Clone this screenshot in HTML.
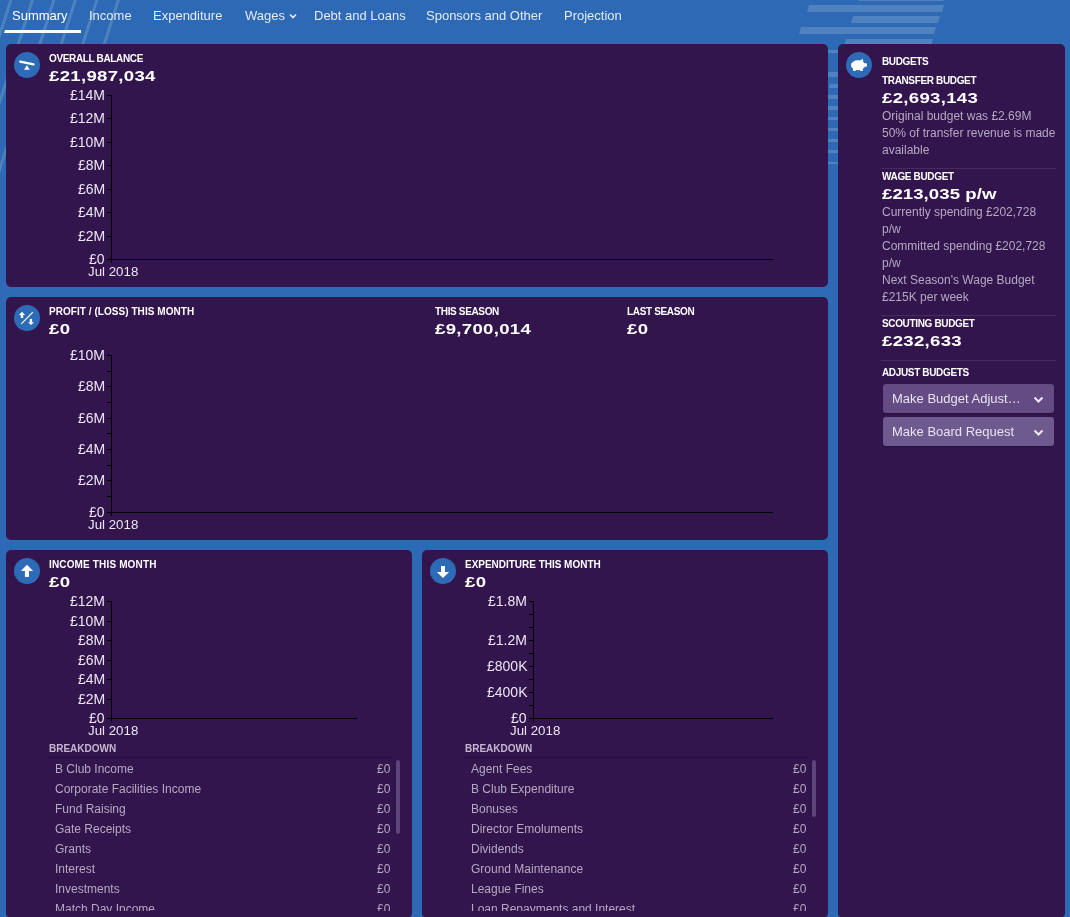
<!DOCTYPE html><html><head><meta charset="utf-8"><style>
html,body{margin:0;padding:0;}
body{width:1070px;height:917px;overflow:hidden;position:relative;background:#2d69b4;font-family:"Liberation Sans",sans-serif;}
.t{position:absolute;white-space:nowrap;will-change:transform;}
.r{position:absolute;}
svg{position:absolute;}
</style></head><body>
<svg width="1070" height="917" style="left:0;top:0"><line x1="11.5" y1="-2" x2="-53.1" y2="200" stroke="rgba(255,255,255,0.16)" stroke-width="3"/><line x1="33.0" y1="-2" x2="-31.6" y2="200" stroke="rgba(255,255,255,0.16)" stroke-width="3"/><line x1="54.5" y1="-2" x2="-10.1" y2="200" stroke="rgba(255,255,255,0.16)" stroke-width="3"/><line x1="76.0" y1="-2" x2="11.4" y2="200" stroke="rgba(255,255,255,0.16)" stroke-width="3"/><line x1="97.5" y1="-2" x2="32.9" y2="200" stroke="rgba(255,255,255,0.16)" stroke-width="3"/><line x1="119.0" y1="-2" x2="54.4" y2="200" stroke="rgba(255,255,255,0.16)" stroke-width="3"/><polygon points="860,-6 946,-6 944.1,1 858.1,1" fill="rgba(255,255,255,0.17)"/><polygon points="809,5 944,5 942.1,12 807.1,12" fill="rgba(255,255,255,0.17)"/><polygon points="853,16 940,16 938.1,23 851.1,23" fill="rgba(255,255,255,0.17)"/><polygon points="801,27 936,27 934.1,34 799.1,34" fill="rgba(255,255,255,0.17)"/><polygon points="846,39 933,39 931.1,46 844.1,46" fill="rgba(255,255,255,0.17)"/><polygon points="828,50 930,50 929.2,53 827.2,53" fill="rgba(255,255,255,0.17)"/><polygon points="828,72 840,72 838.6,77 826.6,77" fill="rgba(255,255,255,0.17)"/><polygon points="830,84 840,84 838.9,88 828.9,88" fill="rgba(255,255,255,0.17)"/><polygon points="828,95 840,95 838.9,99 826.9,99" fill="rgba(255,255,255,0.17)"/><polygon points="828,106 840,106 838.9,110 826.9,110" fill="rgba(255,255,255,0.17)"/><polygon points="828,117 840,117 839.2,120 827.2,120" fill="rgba(255,255,255,0.17)"/><polygon points="828,128 840,128 839.2,131 827.2,131" fill="rgba(255,255,255,0.17)"/><polygon points="828,139 840,139 839.2,142 827.2,142" fill="rgba(255,255,255,0.17)"/><polygon points="828,150 840,150 839.2,153 827.2,153" fill="rgba(255,255,255,0.17)"/><polygon points="828,162 840,162 839.5,164 827.5,164" fill="rgba(255,255,255,0.17)"/></svg>
<div class="t" style="top:7.70px;font-size:13px;line-height:16px;font-weight:400;color:#ffffff;left:11.50px;">Summary</div>
<div class="t" style="top:7.70px;font-size:13px;line-height:16px;font-weight:400;color:#e3ebf6;left:89.00px;">Income</div>
<div class="t" style="top:7.70px;font-size:13px;line-height:16px;font-weight:400;color:#e3ebf6;left:153.00px;">Expenditure</div>
<div class="t" style="top:7.70px;font-size:13px;line-height:16px;font-weight:400;color:#e3ebf6;left:245.00px;">Wages</div>
<div class="t" style="top:7.70px;font-size:13px;line-height:16px;font-weight:400;color:#e3ebf6;left:314.00px;">Debt and Loans</div>
<div class="t" style="top:7.70px;font-size:13px;line-height:16px;font-weight:400;color:#e3ebf6;left:425.50px;">Sponsors and Other</div>
<div class="t" style="top:7.70px;font-size:13px;line-height:16px;font-weight:400;color:#e3ebf6;left:563.50px;">Projection</div>
<svg width="10" height="8" style="left:288px;top:12px"><path d="M2 2.5 L5 5.5 L8 2.5" fill="none" stroke="#e3ebf6" stroke-width="1.7"/></svg>
<div class="r" style="left:4px;top:30px;width:77px;height:3px;background:#fff;clip-path:polygon(1px 0,100% 0,100% 100%,0 100%);"></div>
<div class="r" style="left:6px;top:44px;width:822px;height:243px;background:#33154e;border-radius:5px;"></div>
<div class="r" style="left:6px;top:297px;width:822px;height:243px;background:#33154e;border-radius:5px;"></div>
<div class="r" style="left:6px;top:550px;width:406px;height:368px;background:#33154e;border-radius:5px;"></div>
<div class="r" style="left:422px;top:550px;width:406px;height:368px;background:#33154e;border-radius:5px;"></div>
<div class="r" style="left:838px;top:44px;width:227px;height:874px;background:#33154e;border-radius:5px;"></div>
<svg width="26" height="26" style="left:14px;top:52px" viewBox="0 0 26 26"><circle cx="13" cy="13" r="13" fill="#2e6bb7"/><line x1="6.2" y1="9.6" x2="19.6" y2="12.4" stroke="#fff" stroke-width="2.2" stroke-linecap="round"/><polygon points="12.9,13.2 10.1,17.8 15.8,17.8" fill="#fff"/></svg>
<svg width="26" height="26" style="left:14px;top:305px" viewBox="0 0 26 26"><circle cx="13" cy="13" r="13" fill="#2e6bb7"/><polygon points="8,6.8 4.9,10 11.1,10" fill="#fff"/><rect x="6.8" y="9.8" width="2.4" height="3.2" fill="#fff"/><line x1="7.3" y1="18.8" x2="18.9" y2="7.2" stroke="#fff" stroke-width="1.2"/><rect x="15.8" y="13.9" width="2.3" height="3.5" fill="#fff"/><polygon points="14,17.2 20,17.2 17,20" fill="#fff"/></svg>
<svg width="26" height="26" style="left:14px;top:558px" viewBox="0 0 26 26"><circle cx="13" cy="13" r="13" fill="#2e6bb7"/><polygon points="13,6.8 6.9,12.9 19.1,12.9" fill="#fff"/><rect x="10.9" y="12.8" width="4.1" height="6.1" fill="#fff"/></svg>
<svg width="26" height="26" style="left:430px;top:558px" viewBox="0 0 26 26"><circle cx="13" cy="13" r="13" fill="#2e6bb7"/><polygon points="13,20 6.9,14 19.1,14" fill="#fff"/><rect x="11" y="8" width="4" height="6.1" fill="#fff"/></svg>
<svg width="26" height="26" style="left:846px;top:52px" viewBox="0 0 26 26"><circle cx="13" cy="13" r="13" fill="#2e6bb7"/><ellipse cx="12" cy="13.3" rx="7" ry="5" fill="#fff"/><rect x="16" y="11.2" width="5" height="3.6" rx="1.2" fill="#fff"/><polygon points="13.5,9 17,6.8 17.2,10.5" fill="#fff"/><rect x="7" y="15.5" width="2.8" height="3.4" fill="#fff"/><rect x="13.8" y="15.5" width="3" height="3.4" fill="#fff"/></svg>
<div class="t" style="top:52.53px;font-size:10px;line-height:12px;font-weight:700;color:#ffffff;left:49.00px;letter-spacing:-0.35px;">OVERALL BALANCE</div>
<div class="t" style="top:65.83px;font-size:15.5px;line-height:19px;font-weight:700;color:#ffffff;left:49.00px;letter-spacing:0.25px;transform:scaleX(1.2);transform-origin:0 0;">£21,987,034</div>
<div class="r" style="left:111px;top:95px;width:1px;height:168px;background:#000;"></div>
<div class="r" style="left:107px;top:259px;width:666px;height:1px;background:#000;"></div>
<div class="r" style="left:107px;top:95px;width:4px;height:1px;background:#000;"></div>
<div class="t" style="top:86.15px;font-size:14px;line-height:18px;font-weight:400;color:#ece6f2;right:965.00px;text-align:right;">£14M</div>
<div class="r" style="left:107px;top:118px;width:4px;height:1px;background:#000;"></div>
<div class="t" style="top:109.15px;font-size:14px;line-height:18px;font-weight:400;color:#ece6f2;right:965.00px;text-align:right;">£12M</div>
<div class="r" style="left:107px;top:142px;width:4px;height:1px;background:#000;"></div>
<div class="t" style="top:133.15px;font-size:14px;line-height:18px;font-weight:400;color:#ece6f2;right:965.00px;text-align:right;">£10M</div>
<div class="r" style="left:107px;top:165px;width:4px;height:1px;background:#000;"></div>
<div class="t" style="top:156.15px;font-size:14px;line-height:18px;font-weight:400;color:#ece6f2;right:965.00px;text-align:right;">£8M</div>
<div class="r" style="left:107px;top:189px;width:4px;height:1px;background:#000;"></div>
<div class="t" style="top:180.15px;font-size:14px;line-height:18px;font-weight:400;color:#ece6f2;right:965.00px;text-align:right;">£6M</div>
<div class="r" style="left:107px;top:212px;width:4px;height:1px;background:#000;"></div>
<div class="t" style="top:203.15px;font-size:14px;line-height:18px;font-weight:400;color:#ece6f2;right:965.00px;text-align:right;">£4M</div>
<div class="r" style="left:107px;top:236px;width:4px;height:1px;background:#000;"></div>
<div class="t" style="top:227.15px;font-size:14px;line-height:18px;font-weight:400;color:#ece6f2;right:965.00px;text-align:right;">£2M</div>
<div class="r" style="left:107px;top:259px;width:4px;height:1px;background:#000;"></div>
<div class="t" style="top:250.15px;font-size:14px;line-height:18px;font-weight:400;color:#ece6f2;right:965.00px;text-align:right;">£0</div>
<div class="t" style="top:262.89px;font-size:13.3px;line-height:17px;font-weight:400;color:#ece6f2;left:88.00px;">Jul 2018</div>
<div class="t" style="top:305.54px;font-size:10px;line-height:12px;font-weight:700;color:#ffffff;left:49.00px;letter-spacing:0.05px;">PROFIT / (LOSS) THIS MONTH</div>
<div class="t" style="top:318.93px;font-size:15.5px;line-height:19px;font-weight:700;color:#ffffff;left:49.00px;letter-spacing:0.25px;transform:scaleX(1.2);transform-origin:0 0;">£0</div>
<div class="t" style="top:305.54px;font-size:10px;line-height:12px;font-weight:700;color:#ffffff;left:434.50px;letter-spacing:-0.35px;">THIS SEASON</div>
<div class="t" style="top:318.93px;font-size:15.5px;line-height:19px;font-weight:700;color:#ffffff;left:434.50px;letter-spacing:0.25px;transform:scaleX(1.2);transform-origin:0 0;">£9,700,014</div>
<div class="t" style="top:305.54px;font-size:10px;line-height:12px;font-weight:700;color:#ffffff;left:626.50px;letter-spacing:-0.35px;">LAST SEASON</div>
<div class="t" style="top:318.93px;font-size:15.5px;line-height:19px;font-weight:700;color:#ffffff;left:626.50px;letter-spacing:0.25px;transform:scaleX(1.2);transform-origin:0 0;">£0</div>
<div class="r" style="left:111px;top:355px;width:1px;height:161px;background:#000;"></div>
<div class="r" style="left:107px;top:512px;width:666px;height:1px;background:#000;"></div>
<div class="r" style="left:107px;top:355px;width:4px;height:1px;background:#000;"></div>
<div class="t" style="top:346.15px;font-size:14px;line-height:18px;font-weight:400;color:#ece6f2;right:965.00px;text-align:right;">£10M</div>
<div class="r" style="left:107px;top:371px;width:4px;height:1px;background:#000;"></div>
<div class="r" style="left:107px;top:386px;width:4px;height:1px;background:#000;"></div>
<div class="t" style="top:377.15px;font-size:14px;line-height:18px;font-weight:400;color:#ece6f2;right:965.00px;text-align:right;">£8M</div>
<div class="r" style="left:107px;top:402px;width:4px;height:1px;background:#000;"></div>
<div class="r" style="left:107px;top:418px;width:4px;height:1px;background:#000;"></div>
<div class="t" style="top:409.15px;font-size:14px;line-height:18px;font-weight:400;color:#ece6f2;right:965.00px;text-align:right;">£6M</div>
<div class="r" style="left:107px;top:433px;width:4px;height:1px;background:#000;"></div>
<div class="r" style="left:107px;top:449px;width:4px;height:1px;background:#000;"></div>
<div class="t" style="top:440.15px;font-size:14px;line-height:18px;font-weight:400;color:#ece6f2;right:965.00px;text-align:right;">£4M</div>
<div class="r" style="left:107px;top:465px;width:4px;height:1px;background:#000;"></div>
<div class="r" style="left:107px;top:480px;width:4px;height:1px;background:#000;"></div>
<div class="t" style="top:471.15px;font-size:14px;line-height:18px;font-weight:400;color:#ece6f2;right:965.00px;text-align:right;">£2M</div>
<div class="r" style="left:107px;top:496px;width:4px;height:1px;background:#000;"></div>
<div class="r" style="left:107px;top:512px;width:4px;height:1px;background:#000;"></div>
<div class="t" style="top:503.15px;font-size:14px;line-height:18px;font-weight:400;color:#ece6f2;right:965.00px;text-align:right;">£0</div>
<div class="t" style="top:515.89px;font-size:13.3px;line-height:17px;font-weight:400;color:#ece6f2;left:88.00px;">Jul 2018</div>
<div class="t" style="top:558.53px;font-size:10px;line-height:12px;font-weight:700;color:#ffffff;left:49.00px;letter-spacing:0.15px;">INCOME THIS MONTH</div>
<div class="t" style="top:571.63px;font-size:15.5px;line-height:19px;font-weight:700;color:#ffffff;left:49.00px;letter-spacing:0.25px;transform:scaleX(1.2);transform-origin:0 0;">£0</div>
<div class="r" style="left:111px;top:601px;width:1px;height:121px;background:#000;"></div>
<div class="r" style="left:107px;top:718px;width:250px;height:1px;background:#000;"></div>
<div class="r" style="left:107px;top:601px;width:4px;height:1px;background:#000;"></div>
<div class="t" style="top:592.15px;font-size:14px;line-height:18px;font-weight:400;color:#ece6f2;right:965.00px;text-align:right;">£12M</div>
<div class="r" style="left:107px;top:621px;width:4px;height:1px;background:#000;"></div>
<div class="t" style="top:612.15px;font-size:14px;line-height:18px;font-weight:400;color:#ece6f2;right:965.00px;text-align:right;">£10M</div>
<div class="r" style="left:107px;top:640px;width:4px;height:1px;background:#000;"></div>
<div class="t" style="top:631.15px;font-size:14px;line-height:18px;font-weight:400;color:#ece6f2;right:965.00px;text-align:right;">£8M</div>
<div class="r" style="left:107px;top:660px;width:4px;height:1px;background:#000;"></div>
<div class="t" style="top:651.15px;font-size:14px;line-height:18px;font-weight:400;color:#ece6f2;right:965.00px;text-align:right;">£6M</div>
<div class="r" style="left:107px;top:679px;width:4px;height:1px;background:#000;"></div>
<div class="t" style="top:670.15px;font-size:14px;line-height:18px;font-weight:400;color:#ece6f2;right:965.00px;text-align:right;">£4M</div>
<div class="r" style="left:107px;top:699px;width:4px;height:1px;background:#000;"></div>
<div class="t" style="top:690.15px;font-size:14px;line-height:18px;font-weight:400;color:#ece6f2;right:965.00px;text-align:right;">£2M</div>
<div class="r" style="left:107px;top:718px;width:4px;height:1px;background:#000;"></div>
<div class="t" style="top:709.15px;font-size:14px;line-height:18px;font-weight:400;color:#ece6f2;right:965.00px;text-align:right;">£0</div>
<div class="t" style="top:721.89px;font-size:13.3px;line-height:17px;font-weight:400;color:#ece6f2;left:88.00px;">Jul 2018</div>
<div class="t" style="top:743.33px;font-size:10px;line-height:12px;font-weight:700;color:#c4b8d0;left:49.00px;letter-spacing:0px;">BREAKDOWN</div>
<div class="r" style="left:49px;top:757px;width:342px;height:1px;background:rgba(0,0,0,0.28);"></div>
<div style="position:absolute;left:0;top:757px;width:1070px;height:154px;overflow:hidden">
<div class="t" style="top:4.54px;font-size:12px;line-height:15px;font-weight:400;color:#b5a9c1;left:54.50px;">B Club Income</div>
<div class="t" style="top:4.54px;font-size:12px;line-height:15px;font-weight:400;color:#b5a9c1;right:679.50px;text-align:right;">£0</div>
<div class="t" style="top:24.54px;font-size:12px;line-height:15px;font-weight:400;color:#b5a9c1;left:54.50px;">Corporate Facilities Income</div>
<div class="t" style="top:24.54px;font-size:12px;line-height:15px;font-weight:400;color:#b5a9c1;right:679.50px;text-align:right;">£0</div>
<div class="t" style="top:44.54px;font-size:12px;line-height:15px;font-weight:400;color:#b5a9c1;left:54.50px;">Fund Raising</div>
<div class="t" style="top:44.54px;font-size:12px;line-height:15px;font-weight:400;color:#b5a9c1;right:679.50px;text-align:right;">£0</div>
<div class="t" style="top:64.54px;font-size:12px;line-height:15px;font-weight:400;color:#b5a9c1;left:54.50px;">Gate Receipts</div>
<div class="t" style="top:64.54px;font-size:12px;line-height:15px;font-weight:400;color:#b5a9c1;right:679.50px;text-align:right;">£0</div>
<div class="t" style="top:84.54px;font-size:12px;line-height:15px;font-weight:400;color:#b5a9c1;left:54.50px;">Grants</div>
<div class="t" style="top:84.54px;font-size:12px;line-height:15px;font-weight:400;color:#b5a9c1;right:679.50px;text-align:right;">£0</div>
<div class="t" style="top:104.54px;font-size:12px;line-height:15px;font-weight:400;color:#b5a9c1;left:54.50px;">Interest</div>
<div class="t" style="top:104.54px;font-size:12px;line-height:15px;font-weight:400;color:#b5a9c1;right:679.50px;text-align:right;">£0</div>
<div class="t" style="top:124.54px;font-size:12px;line-height:15px;font-weight:400;color:#b5a9c1;left:54.50px;">Investments</div>
<div class="t" style="top:124.54px;font-size:12px;line-height:15px;font-weight:400;color:#b5a9c1;right:679.50px;text-align:right;">£0</div>
<div class="t" style="top:144.54px;font-size:12px;line-height:15px;font-weight:400;color:#b5a9c1;left:54.50px;">Match Day Income</div>
<div class="t" style="top:144.54px;font-size:12px;line-height:15px;font-weight:400;color:#b5a9c1;right:679.50px;text-align:right;">£0</div>
</div>
<div class="r" style="left:396px;top:760px;width:4px;height:74px;background:#5b4579;border-radius:2px;"></div>
<div class="t" style="top:558.53px;font-size:10px;line-height:12px;font-weight:700;color:#ffffff;left:465.00px;letter-spacing:-0.02px;">EXPENDITURE THIS MONTH</div>
<div class="t" style="top:571.63px;font-size:15.5px;line-height:19px;font-weight:700;color:#ffffff;left:465.00px;letter-spacing:0.25px;transform:scaleX(1.2);transform-origin:0 0;">£0</div>
<div class="r" style="left:533px;top:601px;width:1px;height:121px;background:#000;"></div>
<div class="r" style="left:529px;top:718px;width:244px;height:1px;background:#000;"></div>
<div class="r" style="left:529px;top:601px;width:4px;height:1px;background:#000;"></div>
<div class="t" style="top:592.15px;font-size:14px;line-height:18px;font-weight:400;color:#ece6f2;right:543.00px;text-align:right;">£1.8M</div>
<div class="r" style="left:529px;top:614px;width:4px;height:1px;background:#000;"></div>
<div class="r" style="left:529px;top:627px;width:4px;height:1px;background:#000;"></div>
<div class="r" style="left:529px;top:640px;width:4px;height:1px;background:#000;"></div>
<div class="t" style="top:631.15px;font-size:14px;line-height:18px;font-weight:400;color:#ece6f2;right:543.00px;text-align:right;">£1.2M</div>
<div class="r" style="left:529px;top:653px;width:4px;height:1px;background:#000;"></div>
<div class="r" style="left:529px;top:666px;width:4px;height:1px;background:#000;"></div>
<div class="t" style="top:657.15px;font-size:14px;line-height:18px;font-weight:400;color:#ece6f2;right:543.00px;text-align:right;">£800K</div>
<div class="r" style="left:529px;top:679px;width:4px;height:1px;background:#000;"></div>
<div class="r" style="left:529px;top:692px;width:4px;height:1px;background:#000;"></div>
<div class="t" style="top:683.15px;font-size:14px;line-height:18px;font-weight:400;color:#ece6f2;right:543.00px;text-align:right;">£400K</div>
<div class="r" style="left:529px;top:705px;width:4px;height:1px;background:#000;"></div>
<div class="r" style="left:529px;top:718px;width:4px;height:1px;background:#000;"></div>
<div class="t" style="top:709.15px;font-size:14px;line-height:18px;font-weight:400;color:#ece6f2;right:543.00px;text-align:right;">£0</div>
<div class="t" style="top:721.89px;font-size:13.3px;line-height:17px;font-weight:400;color:#ece6f2;left:510.00px;">Jul 2018</div>
<div class="t" style="top:743.33px;font-size:10px;line-height:12px;font-weight:700;color:#c4b8d0;left:465.00px;letter-spacing:0px;">BREAKDOWN</div>
<div class="r" style="left:465px;top:757px;width:342px;height:1px;background:rgba(0,0,0,0.28);"></div>
<div style="position:absolute;left:0;top:757px;width:1070px;height:154px;overflow:hidden">
<div class="t" style="top:4.54px;font-size:12px;line-height:15px;font-weight:400;color:#b5a9c1;left:470.50px;">Agent Fees</div>
<div class="t" style="top:4.54px;font-size:12px;line-height:15px;font-weight:400;color:#b5a9c1;right:263.50px;text-align:right;">£0</div>
<div class="t" style="top:24.54px;font-size:12px;line-height:15px;font-weight:400;color:#b5a9c1;left:470.50px;">B Club Expenditure</div>
<div class="t" style="top:24.54px;font-size:12px;line-height:15px;font-weight:400;color:#b5a9c1;right:263.50px;text-align:right;">£0</div>
<div class="t" style="top:44.54px;font-size:12px;line-height:15px;font-weight:400;color:#b5a9c1;left:470.50px;">Bonuses</div>
<div class="t" style="top:44.54px;font-size:12px;line-height:15px;font-weight:400;color:#b5a9c1;right:263.50px;text-align:right;">£0</div>
<div class="t" style="top:64.54px;font-size:12px;line-height:15px;font-weight:400;color:#b5a9c1;left:470.50px;">Director Emoluments</div>
<div class="t" style="top:64.54px;font-size:12px;line-height:15px;font-weight:400;color:#b5a9c1;right:263.50px;text-align:right;">£0</div>
<div class="t" style="top:84.54px;font-size:12px;line-height:15px;font-weight:400;color:#b5a9c1;left:470.50px;">Dividends</div>
<div class="t" style="top:84.54px;font-size:12px;line-height:15px;font-weight:400;color:#b5a9c1;right:263.50px;text-align:right;">£0</div>
<div class="t" style="top:104.54px;font-size:12px;line-height:15px;font-weight:400;color:#b5a9c1;left:470.50px;">Ground Maintenance</div>
<div class="t" style="top:104.54px;font-size:12px;line-height:15px;font-weight:400;color:#b5a9c1;right:263.50px;text-align:right;">£0</div>
<div class="t" style="top:124.54px;font-size:12px;line-height:15px;font-weight:400;color:#b5a9c1;left:470.50px;">League Fines</div>
<div class="t" style="top:124.54px;font-size:12px;line-height:15px;font-weight:400;color:#b5a9c1;right:263.50px;text-align:right;">£0</div>
<div class="t" style="top:144.54px;font-size:12px;line-height:15px;font-weight:400;color:#b5a9c1;left:470.50px;">Loan Repayments and Interest</div>
<div class="t" style="top:144.54px;font-size:12px;line-height:15px;font-weight:400;color:#b5a9c1;right:263.50px;text-align:right;">£0</div>
</div>
<div class="r" style="left:812px;top:760px;width:4px;height:57px;background:#5b4579;border-radius:2px;"></div>
<div class="t" style="top:56.44px;font-size:10px;line-height:12px;font-weight:700;color:#ffffff;left:881.50px;letter-spacing:-0.35px;">BUDGETS</div>
<div class="t" style="top:74.53px;font-size:10px;line-height:12px;font-weight:700;color:#ffffff;left:881.50px;letter-spacing:-0.35px;">TRANSFER BUDGET</div>
<div class="t" style="top:88.03px;font-size:15.5px;line-height:19px;font-weight:700;color:#ffffff;left:881.50px;letter-spacing:0.25px;transform:scaleX(1.2);transform-origin:0 0;">£2,693,143</div>
<div class="t" style="top:108.74px;font-size:12px;line-height:15px;font-weight:400;color:#b5a9c1;left:881.50px;">Original budget was £2.69M</div>
<div class="t" style="top:125.74px;font-size:12px;line-height:15px;font-weight:400;color:#b5a9c1;left:881.50px;">50% of transfer revenue is made</div>
<div class="t" style="top:142.74px;font-size:12px;line-height:15px;font-weight:400;color:#b5a9c1;left:881.50px;">available</div>
<div class="r" style="left:881px;top:168px;width:175px;height:1px;background:rgba(255,255,255,0.1);"></div>
<div class="t" style="top:170.73px;font-size:10px;line-height:12px;font-weight:700;color:#ffffff;left:881.50px;letter-spacing:-0.35px;">WAGE BUDGET</div>
<div class="t" style="top:184.03px;font-size:15.5px;line-height:19px;font-weight:700;color:#ffffff;left:881.50px;letter-spacing:0.05px;transform:scaleX(1.2);transform-origin:0 0;">£213,035 p/w</div>
<div class="t" style="top:205.04px;font-size:12px;line-height:15px;font-weight:400;color:#b5a9c1;left:881.50px;">Currently spending £202,728</div>
<div class="t" style="top:222.04px;font-size:12px;line-height:15px;font-weight:400;color:#b5a9c1;left:881.50px;">p/w</div>
<div class="t" style="top:239.04px;font-size:12px;line-height:15px;font-weight:400;color:#b5a9c1;left:881.50px;">Committed spending £202,728</div>
<div class="t" style="top:256.04px;font-size:12px;line-height:15px;font-weight:400;color:#b5a9c1;left:881.50px;">p/w</div>
<div class="t" style="top:273.04px;font-size:12px;line-height:15px;font-weight:400;color:#b5a9c1;left:881.50px;">Next Season's Wage Budget</div>
<div class="t" style="top:290.04px;font-size:12px;line-height:15px;font-weight:400;color:#b5a9c1;left:881.50px;">£215K per week</div>
<div class="r" style="left:881px;top:315px;width:175px;height:1px;background:rgba(255,255,255,0.1);"></div>
<div class="t" style="top:317.64px;font-size:10px;line-height:12px;font-weight:700;color:#ffffff;left:881.50px;letter-spacing:-0.35px;">SCOUTING BUDGET</div>
<div class="t" style="top:330.93px;font-size:15.5px;line-height:19px;font-weight:700;color:#ffffff;left:881.50px;letter-spacing:0.25px;transform:scaleX(1.2);transform-origin:0 0;">£232,633</div>
<div class="r" style="left:881px;top:360px;width:175px;height:1px;background:rgba(255,255,255,0.1);"></div>
<div class="t" style="top:366.54px;font-size:10px;line-height:12px;font-weight:700;color:#ffffff;left:881.50px;letter-spacing:-0.35px;">ADJUST BUDGETS</div>
<div class="r" style="left:883px;top:384px;width:171px;height:29px;background:#644b84;border-radius:3px;box-shadow:0 1px 1px rgba(0,0,0,0.25);"></div>
<div class="r" style="left:883px;top:417px;width:171px;height:29px;background:#6f5a8f;border-radius:3px;box-shadow:0 1px 1px rgba(0,0,0,0.25);"></div>
<div class="t" style="top:391.10px;font-size:13px;line-height:16px;font-weight:400;color:#e8e2f0;left:891.50px;">Make Budget Adjust…</div>
<div class="t" style="top:424.10px;font-size:13px;line-height:16px;font-weight:400;color:#e8e2f0;left:891.50px;">Make Board Request</div>
<svg width="12" height="8" style="left:1033px;top:396px"><path d="M1.5 1.5 L5.5 5.5 L9.5 1.5" fill="none" stroke="#f0ecf6" stroke-width="2"/></svg>
<svg width="12" height="8" style="left:1033px;top:429px"><path d="M1.5 1.5 L5.5 5.5 L9.5 1.5" fill="none" stroke="#f0ecf6" stroke-width="2"/></svg>
</body></html>
